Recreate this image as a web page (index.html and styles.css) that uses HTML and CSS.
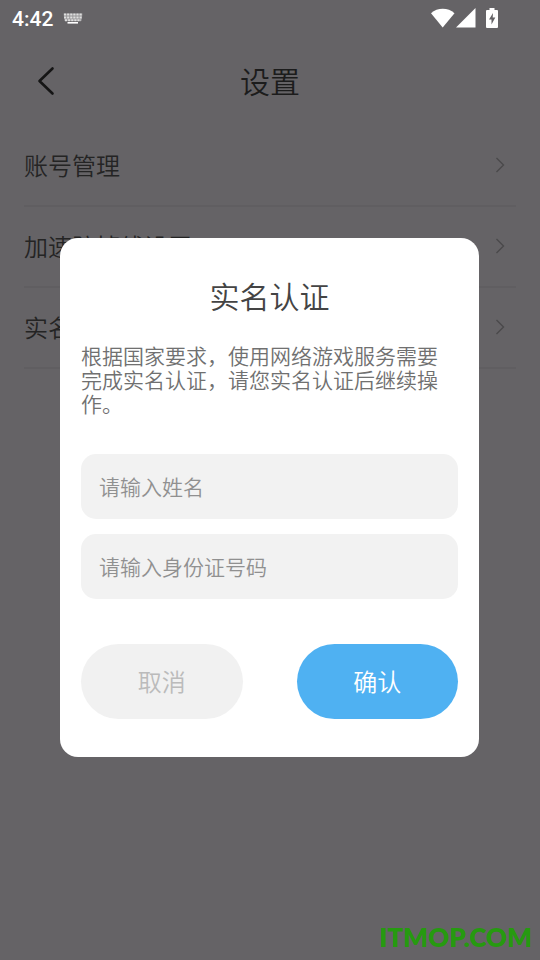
FILE: index.html
```html
<!DOCTYPE html>
<html lang="zh-CN">
<head>
  <meta charset="UTF-8">
  <meta name="viewport" content="width=device-width, initial-scale=1.0">
  <title>设置</title>
  <link rel="stylesheet" href="styles.css">
</head>
<body>
  <div class="status-bar">
    <span class="time">4:42</span>
    <svg class="keyboard" width="20" height="11" viewBox="0 0 20 11">
      <path d="M1 1.5h18M1 4.5h18M2 7.2h16" stroke="#dedede" stroke-width="2" stroke-dasharray="2.2 0.9"/>
      <path d="M0.5 0.5h19l-1 7.5h-17z" fill="#dedede" opacity="0.4"/>
      <path d="M4.5 9.8h10.5" stroke="#fff" stroke-width="1.6"/>
    </svg>
    <div class="status-icons">
      <svg width="24" height="20" viewBox="0 0 24 20">
        <path d="M0 5.2C6.5-.7 17-.7 23.5 5.2L11.7 19.5z" fill="#fff"/>
      </svg>
      <svg width="20" height="20" viewBox="0 0 20 20">
        <path d="M0 19.5L19.5 0v19.5z" fill="#fff"/>
      </svg>
      <svg class="battery" width="12" height="20" viewBox="0 0 12 20">
        <path d="M3.5 0h5v2H11a1 1 0 0 1 1 1v16a1 1 0 0 1-1 1H1a1 1 0 0 1-1-1V3a1 1 0 0 1 1-1h2.5z" fill="#fff"/>
        <path d="M7 5L3 11.5h2.500v5L9.300 9.500H6.700z" fill="#656366"/>
      </svg>
    </div>
  </div>

  <header class="header">
    <button class="back" aria-label="返回">
      <svg width="18" height="30" viewBox="0 0 18 30">
        <path d="M15.5 2.5L2.5 15l13 12.5" fill="none" stroke="#151515" stroke-width="2.6" stroke-linecap="round" stroke-linejoin="round"/>
      </svg>
    </button>
    <h1>设置</h1>
  </header>

  <nav class="menu">
    <a href="#account">账号管理
      <svg width="10" height="16" viewBox="0 0 10 16"><path d="M1.5 1L8.5 8l-7 7"/></svg>
    </a>
    <a href="#network">加速防掉线设置
      <svg width="10" height="16" viewBox="0 0 10 16"><path d="M1.5 1L8.5 8l-7 7"/></svg>
    </a>
    <a href="#verify">实名认证
      <svg width="10" height="16" viewBox="0 0 10 16"><path d="M1.5 1L8.5 8l-7 7"/></svg>
    </a>
  </nav>

  <div class="overlay">
    <form class="dialog" role="dialog" aria-labelledby="dialog-title">
      <h2 id="dialog-title">实名认证</h2>
      <p>根据国家要求，使用网络游戏服务需要完成实名认证，请您实名认证后继续操作。</p>
      <input type="text" placeholder="请输入姓名" aria-label="姓名">
      <input type="text" placeholder="请输入身份证号码" aria-label="身份证号码">
      <div class="actions">
        <button type="button" class="cancel">取消</button>
        <button type="button" class="confirm">确认</button>
      </div>
    </form>
  </div>

  <div class="watermark">ITMOP.COM</div>
</body>
</html>
```

FILE: styles.css
```css
* {
  box-sizing: border-box;
}
body {
  margin: 0;
  min-height: 100vh;
  background-color: #656366;
  color: #242424;
  font-family: "Noto Sans CJK SC", sans-serif;
  font-weight: 350;
}
button {
  border: none;
  padding: 0;
  font-family: inherit;
  font-weight: inherit;
  cursor: pointer;
}
svg {
  display: block;
}

.status-bar {
  display: flex;
  align-items: center;
  height: 36px;
  padding: 0 42px 0 12px;
}
.time {
  color: #fff;
  font: 500 21px/24px Roboto, sans-serif;
  padding-top: 2px;
}
.keyboard {
  margin-left: 10px;
}
.status-icons {
  display: flex;
  gap: 1px;
  margin-left: auto;
}
.battery {
  margin-left: 9px;
}

.header {
  display: grid;
  grid-template-columns: 60px 1fr 60px;
  align-items: center;
  height: 89px;
}
.back {
  justify-self: end;
  margin-right: 5px;
  background: none;
}
h1 {
  margin: 0;
  padding-bottom: 2px;
  font-size: 30px;
  font-weight: inherit;
  line-height: 44px;
  text-align: center;
  color: #1c1c1c;
}

.menu {
  margin: 1px 24px 0;
}
.menu a {
  display: flex;
  align-items: center;
  justify-content: space-between;
  height: 81px;
  padding: 0 11px 2px 0;
  border-bottom: 2px solid #605e61;
  color: #242424;
  font-size: 24px;
  text-decoration: none;
}
.menu path {
  fill: none;
  stroke: #4a494b;
  stroke-width: 1.4;
}

.overlay {
  position: fixed;
  inset: 0;
  display: flex;
  align-items: center;
  padding: 35px 61px 0 60px;
}
.dialog {
  width: 100%;
  padding: 35px 21px 38px;
  border-radius: 18px;
  background-color: #fff;
}
h2 {
  margin: 0;
  font-size: 30px;
  font-weight: inherit;
  line-height: 44px;
  text-align: center;
  color: #444;
}
.dialog p {
  margin: 26px 0 39px;
  font-size: 21px;
  line-height: 24px;
  color: #707070;
}
.dialog input {
  display: block;
  width: 100%;
  height: 65px;
  margin-bottom: 15px;
  padding: 0 18px 2px;
  border: none;
  border-radius: 15px;
  background-color: #f2f2f2;
  color: #444;
  font-family: inherit;
  font-size: 21px;
  font-weight: inherit;
}
.dialog input::placeholder {
  color: #909090;
}
.actions {
  display: grid;
  grid-template-columns: 1fr 1fr;
  gap: 54px;
  margin-top: 45px;
}
.actions button {
  height: 75px;
  padding-bottom: 2px;
  border-radius: 38px;
  font-size: 24px;
}
.actions .cancel {
  background-color: #f1f1f1;
  color: #bbb;
}
.actions .confirm {
  background-color: #4fb1f2;
  color: #fff;
}

.watermark {
  position: fixed;
  right: 8px;
  bottom: 6px;
  color: #269a10;
  font: 800 26px/34px Lato, sans-serif;
}
```
